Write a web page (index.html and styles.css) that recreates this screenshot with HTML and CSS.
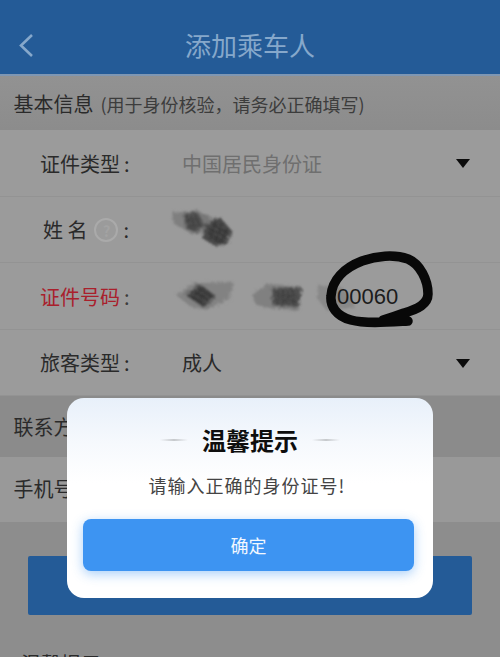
FILE: index.html
```html
<!DOCTYPE html>
<html lang="zh-CN">
<head>
<meta charset="utf-8">
<title>添加乘车人</title>
<link rel="stylesheet" href="styles.css">
</head>
<body>
<div class="page">
  <header class="topbar">
    <svg class="back" width="16" height="24" viewBox="0 0 16 24"><path d="M14 2 L3 12.500 L14 23" fill="none" stroke="#86a8cb" stroke-width="2.600"/></svg>
    <h1 class="title">添加乘车人</h1>
  </header>
  <section class="section-head"><span class="section-name">基本信息</span> <span class="section-note">(用于身份核验&#xFF0C;请务必正确填写)</span></section>
  <div class="row">
    <span class="label">证件类型<i class="colon">:</i></span>
    <span class="value muted">中国居民身份证</span>
    <span class="caret"></span>
  </div>
  <div class="row">
    <span class="label"><span class="name-label">姓 名</span><span class="help">?</span><i class="colon colon-help">:</i></span>
    <span class="value">
      <svg class="mask" width="60" height="38" viewBox="0 0 60 38">
        <defs>
          <filter id="smudge" x="-20%" y="-20%" width="140%" height="140%">
            <feTurbulence type="fractalNoise" baseFrequency="0.55" numOctaves="3" seed="7"/>
            <feDisplacementMap in="SourceGraphic" scale="7"/>
            <feGaussianBlur stdDeviation="0.8"/>
          </filter>
        </defs>
        <g filter="url(#smudge)">
          <path d="M-10 2 L15 -1 L27 6 L27 21 L10 23 L-8 13 Z" fill="#7f7f7f"/>
          <path d="M1 3 L15 0 L23 14 L15 22 L4 18 Z" fill="#545454"/>
          <path d="M5 5 L9 19 M9 4 L13 19 M13 3 L18 17 M4 10 L20 8 M6 15 L20 13" stroke="#3c3c3c" stroke-width="1.300" fill="none"/>
          <path d="M24 11 L38 6 L50 20 L45 33 L33 35 L20 27 Z" fill="#484848"/>
          <path d="M24 16 L44 26 M25 21 L42 30 M29 13 L46 22 M28 26 L40 31 M34 10 L27 30 M40 12 L33 32 M45 18 L39 32" stroke="#303030" stroke-width="1.300" fill="none"/>
          <path d="M18 2 L29 5 L27 14 L20 12 Z" fill="#777"/>
        </g>
      </svg>
    </span>
  </div>
  <div class="row">
    <span class="label label-error">证件号码<i class="colon colon-plain">:</i></span>
    <span class="value id-value">
      <svg class="mask" width="155" height="34" viewBox="0 0 155 34">
        <g filter="url(#smudge)">
          <path d="M-6 15 L12 3 L52 2 L47 19 L24 30 L9 27 Z" fill="#828282"/>
          <path d="M3 15 L18 4 L34 16 L22 28 Z" fill="#464646"/>
          <path d="M8 15 L22 25 M12 11 L27 21 M16 8 L30 17 M10 19 L22 8 M15 22 L27 11" stroke="#303030" stroke-width="1.300" fill="none"/>
          <path d="M70 14 L86 4 L120 7 L116 31 L86 28 L74 25 Z" fill="#808080"/>
          <path d="M90 8 L120 7 L117 28 L90 25 Z" fill="#4f4f4f"/>
          <path d="M96 10 L96 24 M101 9 L101 25 M106 9 L106 26 M111 9 L111 26 M94 15 L116 16 M94 20 L115 21" stroke="#383838" stroke-width="1.200" fill="none"/>
          <path d="M136 5 L160 7 L174 27 L145 31 L135 18 Z" fill="#888"/>
        </g>
      </svg><span class="digits">00060</span>
    </span>
    <svg class="ink" width="116" height="90" viewBox="0 0 116 90"><path d="M88 71 C70 72 45 74 31 70 C16 66 10 56 11 46 C12 30 24 18 42 11 C56 6 74 4 88 9 C100 14 108 30 108 44 C108 54 98 59 84 63 C76 66 70 68 63 70" fill="none" stroke="#080808" stroke-width="9.500" stroke-linecap="round" stroke-linejoin="round"/></svg>
  </div>
  <div class="row">
    <span class="label">旅客类型<i class="colon">:</i></span>
    <span class="value">成人</span>
    <span class="caret"></span>
  </div>
  <section class="section-head section-contact"><span class="section-name">联系方式</span></section>
  <div class="row row-phone"><span class="section-name">手机号码</span></div>
  <div class="submit"></div>
  <p class="tips">温馨提示</p>

  <div class="dialog">
    <div class="dialog-title"><span class="rule"></span><strong>温馨提示</strong><span class="rule"></span></div>
    <p class="dialog-text">请输入正确的身份证号!</p>
    <button class="dialog-btn" type="button">确定</button>
  </div>
</div>
</body>
</html>
```

FILE: styles.css
```css
* { box-sizing: border-box; }
html, body { margin: 0; padding: 0; }
body {
  width: 500px;
  height: 657px;
  overflow: hidden;
  font-family: "Noto Sans CJK SC", "Noto Sans", sans-serif;
  color: #2a2a2a;
  background: #8d8d8d;
}
.page { position: relative; width: 500px; height: 657px; overflow: hidden; }

.topbar {
  height: 76px;
  padding: 0 0 2px 0;
  border-bottom: 2px solid #7f97b3;
  background: #245b97;
  display: flex;
  align-items: flex-end;
  justify-content: center;
  position: relative;
}
.title {
  margin: 0 0 9px;
  font-size: 26px;
  line-height: 36px;
  font-weight: 400;
  color: #86a8cb;
}
.back { position: absolute; left: 18px; top: 33px; }

.section-head {
  height: 54px;
  padding: 1px 13.500px 0;
  display: flex;
  align-items: center;
  gap: 7px;
  background: linear-gradient(#929292, #8c8c8c);
}
.section-name { font-size: 20px; line-height: 28px; color: #2a2a2a; }
.section-note { font-size: 18px; line-height: 28px; color: #3c3c3c; }
.section-contact { height: 60.500px; background: #8b8b8b; }

.row {
  position: relative;
  height: 66.500px;
  padding: 2px 30px 0 40px;
  display: flex;
  align-items: center;
  background: #9b9b9b;
  border-bottom: 1px solid #939393;
}
.row-phone { height: 65.500px; padding: 0 0 0 13.500px; border-bottom: 0; background: #999; }

.label { width: 142px; flex: none; display: flex; align-items: center; font-size: 20px; line-height: 28px; color: #2a2a2a; }
.label-error { color: #a9202c; }
.colon { font-style: normal; margin-left: 4px; color: #2a2a2a; }
.colon-plain { color: #3d3d3d; }
.colon-help { margin-left: 5px; }
.name-label { margin-left: 3px; letter-spacing: 0; }
.help {
  width: 24px;
  height: 24px;
  margin-left: 7px;
  border: 2px solid #aaa;
  border-radius: 50%;
  display: flex;
  align-items: center;
  justify-content: center;
  font-size: 15px;
  font-weight: 700;
  line-height: 1;
  color: #a3a3a3;
}

.value { flex: 1; display: flex; align-items: center; font-size: 20px; line-height: 28px; color: #2a2a2a; }
.muted { color: #6f6f6f; }
.mask { display: block; flex: none; overflow: visible; }
.digits { font-family: "Liberation Sans", sans-serif; font-size: 22px; color: #1c1c1c; }
.ink { position: absolute; left: 320px; top: -13px; }

.caret {
  width: 0;
  height: 0;
  border-left: 7px solid transparent;
  border-right: 7px solid transparent;
  border-top: 9px solid #0c0c0c;
  flex: none;
}

.submit {
  height: 59px;
  margin: 34px 28px 0;
  border-radius: 2px;
  background: #245b97;
}
.tips { margin: 35px 0 0 21px; font-size: 20px; line-height: 28px; color: #2a2a2a; }

.dialog {
  position: absolute;
  left: 67px;
  top: 398px;
  width: 366px;
  height: 200px;
  padding: 24px 16px 0;
  border-radius: 17px;
  background: linear-gradient(#e8f0fa 0, #f6f9fd 45px, #fff 85px);
  display: flex;
  flex-direction: column;
  align-items: center;
}
.dialog-title { display: flex; align-items: center; gap: 14px; height: 36px; }
.dialog-title strong { font-size: 24px; line-height: 36px; font-weight: 700; color: #0e0e0e; }
.rule { width: 28px; height: 2px; background: linear-gradient(90deg, rgba(190, 194, 198, 0), #c6c9cc, rgba(190, 194, 198, 0)); }
.dialog-text { margin: 14px 6px 0 0; font-size: 18px; line-height: 26px; color: #444; letter-spacing: 1px; }
.dialog-btn {
  width: 331px;
  height: 52px;
  margin: 21px 3px 0 0;
  border: 0;
  border-radius: 8px;
  background: #3d94f2;
  box-shadow: 0 3px 12px rgba(61, 148, 242, 0.450);
  color: #f2f8ff;
  font-family: inherit;
  font-size: 18px;
}
```
